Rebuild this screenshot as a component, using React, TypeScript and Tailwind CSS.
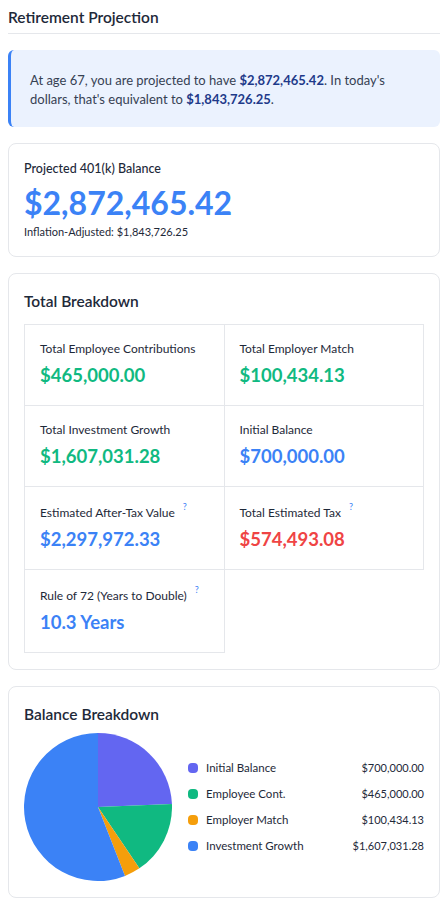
import React from "react";

const font = { fontFamily: 'Lato, "Noto Sans", sans-serif' };

const slices = [
  { label: "Initial Balance", value: 700000, color: "#6366f1", text: "$700,000.00" },
  { label: "Employee Cont.", value: 465000, color: "#10b981", text: "$465,000.00" },
  { label: "Employer Match", value: 100434.13, color: "#f59e0b", text: "$100,434.13" },
  { label: "Investment Growth", value: 1607031.28, color: "#3b82f6", text: "$1,607,031.28" },
];

function Pie() {
  const total = slices.reduce((s, x) => s + x.value, 0);
  const r = 74;
  const c = 74;
  let acc = 0;
  return (
    <svg width="148" height="148" viewBox="0 0 148 148" className="shrink-0">
      {slices.map((s) => {
        const a0 = (acc / total) * Math.PI * 2;
        acc += s.value;
        const a1 = (acc / total) * Math.PI * 2;
        const x0 = c + r * Math.sin(a0);
        const y0 = c - r * Math.cos(a0);
        const x1 = c + r * Math.sin(a1);
        const y1 = c - r * Math.cos(a1);
        const large = a1 - a0 > Math.PI ? 1 : 0;
        return (
          <path
            key={s.label}
            d={`M${c},${c} L${x0},${y0} A${r},${r} 0 ${large} 1 ${x1},${y1} Z`}
            fill={s.color}
          />
        );
      })}
    </svg>
  );
}

function Help() {
  return <span className="ml-2 relative -top-[7px] text-[9px] text-[#3b82f6] leading-none">?</span>;
}

function Cell({ label, value, color, help }: { label: string; value: string; color: string; help?: boolean }) {
  return (
    <div className={`border-r border-b border-gray-200 px-[15px] pb-4 ${help ? "pt-[18px]" : "pt-4"}`}>
      <div className="text-[12px] leading-4 text-gray-800">
        {label}
        {help && <Help />}
      </div>
      <div className={`mt-1 text-[18.5px] leading-7 font-bold ${color}`}>{value}</div>
    </div>
  );
}

export default function App() {
  return (
    <div className="bg-white p-2 text-gray-800" style={font}>
      <div className="border-b border-gray-200 pb-[7px]">
        <h1 className="text-[15.5px] leading-[18px] font-semibold text-gray-800">Retirement Projection</h1>
      </div>

      <div className="mt-4 rounded-md border-l-[3px] border-[#3b82f6] bg-[#ebf2fe] pl-[19px] pr-5 pt-[21px] pb-[18px] text-[13px] leading-[19px] text-gray-700">
        At age 67, you are projected to have <b className="font-bold text-[#1e3a8a]">$2,872,465.42</b>. In today's
        dollars, that's equivalent to <b className="font-bold text-[#1e3a8a]">$1,843,726.25</b>.
      </div>

      <div className="mt-4 rounded-lg border border-gray-200 px-[15px] py-4">
        <div className="text-[12.5px] leading-[18px] font-medium text-gray-800">Projected 401(k) Balance</div>
        <div className="mt-[5px] text-[32px] leading-[40px] font-bold text-[#3b82f6]">$2,872,465.42</div>
        <div className="mt-[1px] text-[11px] leading-4 text-gray-800">Inflation-Adjusted: $1,843,726.25</div>
      </div>

      <div className="mt-4 rounded-lg border border-gray-200 px-[15px] pt-[15px] pb-4">
        <h2 className="text-[15.5px] leading-6 font-semibold text-gray-800">Total Breakdown</h2>
        <div className="mt-[11px] grid grid-cols-2 border-l border-t border-gray-200">
          <Cell label="Total Employee Contributions" value="$465,000.00" color="text-[#10b981]" />
          <Cell label="Total Employer Match" value="$100,434.13" color="text-[#10b981]" />
          <Cell label="Total Investment Growth" value="$1,607,031.28" color="text-[#10b981]" />
          <Cell label="Initial Balance" value="$700,000.00" color="text-[#3b82f6]" />
          <Cell label="Estimated After-Tax Value" value="$2,297,972.33" color="text-[#3b82f6]" help />
          <Cell label="Total Estimated Tax" value="$574,493.08" color="text-[#ef4444]" help />
          <Cell label="Rule of 72 (Years to Double)" value="10.3 Years" color="text-[#3b82f6]" help />
        </div>
      </div>

      <div className="mt-4 rounded-lg border border-gray-200 px-[15px] pt-[15px] pb-4">
        <h2 className="text-[15.5px] leading-6 font-semibold text-gray-800">Balance Breakdown</h2>
        <div className="mt-[7px] flex items-center gap-4">
          <Pie />
          <div className="flex flex-1 flex-col gap-[9.7px]">
            {slices.map((s) => (
              <div key={s.label} className="flex items-center text-[11px] leading-4 text-gray-800">
                <span className="h-[10px] w-[10px] rounded-sm" style={{ backgroundColor: s.color }} />
                <span className="ml-2 flex-1 text-[11.5px]">{s.label}</span>
                <span>{s.text}</span>
              </div>
            ))}
          </div>
        </div>
      </div>
    </div>
  );
}
